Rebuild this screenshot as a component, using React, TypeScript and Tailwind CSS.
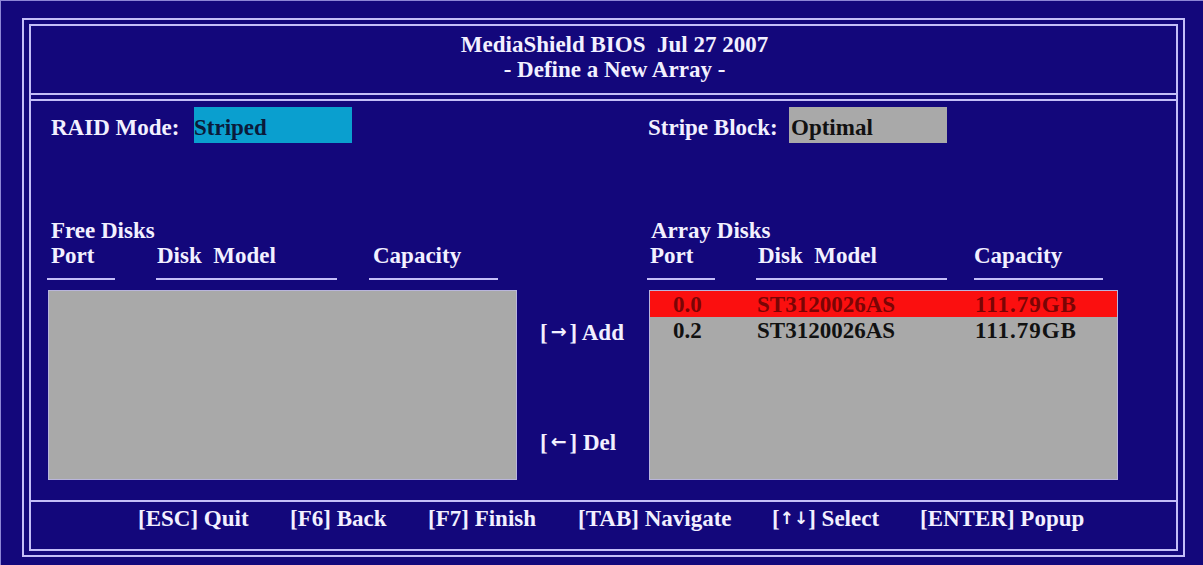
const SERIF = "font-['Liberation_Serif','Times_New_Roman',serif]";

type Col = { label: string; offset: string; width: string; pad: string };

const FREE_COLS: Col[] = [
  { label: "Port", offset: "ml-[-1px]", width: "w-[68px]", pad: "pl-[4px]" },
  { label: "Disk  Model", offset: "ml-[41px]", width: "w-[181px]", pad: "pl-[1px]" },
  { label: "Capacity", offset: "ml-[32px]", width: "w-[129px]", pad: "pl-[4px]" },
];

const ARRAY_COLS: Col[] = [
  { label: "Port", offset: "ml-[-1px]", width: "w-[68px]", pad: "pl-[3px]" },
  { label: "Disk  Model", offset: "ml-[41px]", width: "w-[191px]", pad: "pl-[2px]" },
  { label: "Capacity", offset: "ml-[27px]", width: "w-[129px]", pad: "pl-[0px]" },
];

const ARRAY_DISKS = [
  { port: "0.0", model: "ST3120026AS", size: "111.79GB", selected: true },
  { port: "0.2", model: "ST3120026AS", size: "111.79GB", selected: false },
];

// key, label, slot width
const KEYS: [string, string, string][] = [
  ["ESC", "Quit", "w-[152px]"],
  ["F6", "Back", "w-[138px]"],
  ["F7", "Finish", "w-[150px]"],
  ["TAB", "Navigate", "w-[194px]"],
  ["↑↓", "Select", "w-[148px]"],
  ["ENTER", "Popup", ""],
];

function Arrow({ ch, wide }: { ch: string; wide?: boolean }) {
  return (
    <span className={`font-['DejaVu_Sans',sans-serif] text-[17px] align-[2px] ${wide ? "px-[3px] text-[19px]" : ""}`}>
      {ch}
    </span>
  );
}

function ColumnHeads({ title, cols }: { title: string; cols: Col[] }) {
  return (
    <div>
      <div className="pl-[3px]">{title}</div>
      <div className="flex">
        {cols.map((c) => (
          <div key={c.label} className={`${c.offset} ${c.width}`}>
            <div className={`${c.pad} whitespace-pre`}>{c.label}</div>
            <div className="mt-[10px] h-[2px] bg-[#c4bef8]" />
          </div>
        ))}
      </div>
    </div>
  );
}

export default function App() {
  return (
    <div
      className={`w-[1203px] h-[565px] overflow-hidden bg-[#13077b] border-t border-l border-[#8d86d6] text-[#f2f0ff] font-bold text-[23px] leading-[25px] ${SERIF}`}
    >
      {/* double frame */}
      <div className="ml-[21px] mt-[17px] w-[1163px] h-[539px] border-2 border-[#c4bef8] px-[5px] py-[4px]">
        <div className="h-full border-2 border-[#c4bef8] flex flex-col">
          {/* title */}
          <div className="h-[69px] border-b-2 border-[#c4bef8] pt-[6px] pl-[22px] text-center">
            <div className="whitespace-pre">MediaShield BIOS  Jul 27 2007</div>
            <div className="whitespace-pre">- Define a New Array -</div>
          </div>

          <div className="mt-[4px] flex-1 border-y-2 border-[#c4bef8] pl-[17px]">
            <div className="grid grid-cols-[469px_132px_469px]">
              {/* mode row */}
              <div className="col-span-3 mt-[6px] flex h-[36px]">
                <div className="flex w-[601px]">
                  <div className="w-[146px] pl-[3px] pt-[8px]">RAID Mode:</div>
                  <div className="w-[158px] bg-[#0a9fcf] text-[#0b1a3a] pt-[8px]">Striped</div>
                </div>
                <div className="flex">
                  <div className="w-[141px] ml-[-1px] pt-[8px]">Stripe Block:</div>
                  <div className="w-[158px] bg-[#a9a9a9] text-[#111] pt-[8px] pl-[2px]">Optimal</div>
                </div>
              </div>

              {/* list heads */}
              <div className="mt-[75px]">
                <ColumnHeads title="Free Disks" cols={FREE_COLS} />
              </div>
              <div />
              <div className="mt-[75px] ml-[-1px]">
                <ColumnHeads title="Array Disks" cols={ARRAY_COLS} />
              </div>

              {/* free disks panel */}
              <div className="mt-[10px] h-[190px] bg-[#a9a9a9] border border-[#b9b5dc]" />

              {/* add / del */}
              <div className="mt-[10px] h-[190px] pl-[23px] flex flex-col">
                <div className="mt-[29px] whitespace-pre">
                  [<Arrow ch="→" wide />] Add
                </div>
                <div className="mt-[84px] whitespace-pre">
                  [<Arrow ch="←" wide />] Del
                </div>
              </div>

              {/* array disks panel */}
              <div className="mt-[10px] h-[190px] bg-[#a9a9a9] border border-[#b9b5dc] text-[#111]">
                {ARRAY_DISKS.map((d) => (
                  <div
                    key={d.port}
                    className={`flex h-[26px] items-center ${d.selected ? "bg-[#fb0f0f] text-[#7a0505]" : ""}`}
                  >
                    <div className="w-[107px] pl-[23px]">{d.port}</div>
                    <div className="w-[218px]">{d.model}</div>
                    <div className="tracking-[1px]">{d.size}</div>
                  </div>
                ))}
              </div>
            </div>
          </div>

          {/* key help */}
          <div className="h-[47px] flex pl-[107px] pt-[4px]">
            {KEYS.map(([key, label, w]) => (
              <div key={key} className={`${w} whitespace-pre`}>
                [{key === "↑↓" ? <Arrow ch={key} /> : key}] {label}
              </div>
            ))}
          </div>
        </div>
      </div>
    </div>
  );
}
